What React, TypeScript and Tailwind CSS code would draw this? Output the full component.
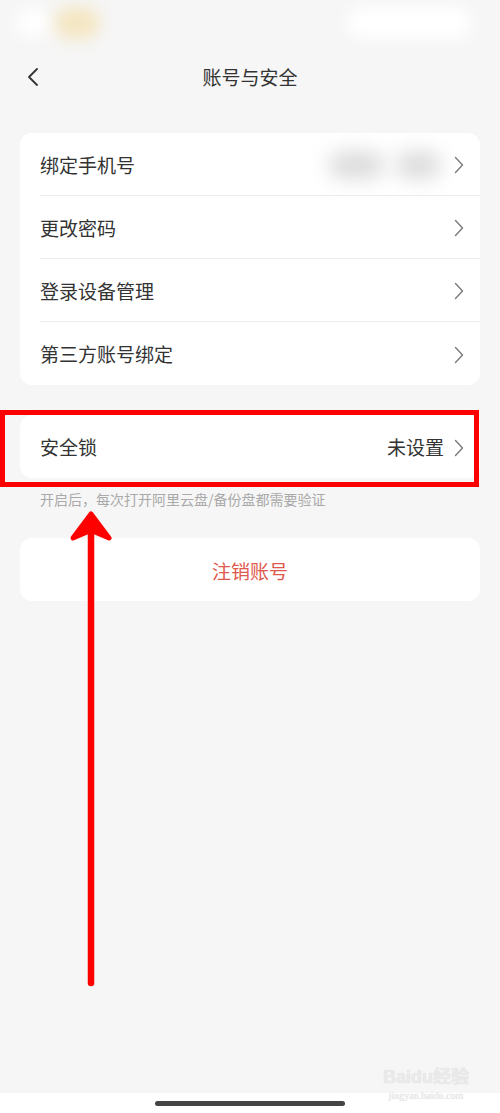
import React from "react";

const font = { fontFamily: '"Noto Sans CJK SC", "Noto Sans", sans-serif' };

function Chevron() {
  return (
    <svg width="10" height="18" viewBox="0 0 10 18" className="shrink-0">
      <path d="M1.5 1.5 L8.5 9 L1.5 16.5" fill="none" stroke="#7a7a7a" strokeWidth="1.4" strokeLinecap="round" strokeLinejoin="round" />
    </svg>
  );
}

function Row({ label, right, last }: { label: string; right?: React.ReactNode; last?: boolean }) {
  return (
    <div className="flex h-[63px] items-center pl-5">
      <div className={`flex h-full flex-1 items-center pr-4 pt-[2px] ${last ? "" : "border-b border-[#ececec]"}`}>
        <span className="flex-1 text-[19px] text-[#333]">{label}</span>
        {right}
        <span className="ml-2.5">
          <Chevron />
        </span>
      </div>
    </div>
  );
}

export default function App() {
  const rows = ["绑定手机号", "更改密码", "登录设备管理", "第三方账号绑定"];
  return (
    <div className="relative flex h-[1113px] w-[500px] flex-col overflow-hidden bg-[#f6f6f6]" style={font}>
      {/* status bar (blurred in shot) */}
      <div className="flex h-[45px] items-center justify-between px-4">
        <div className="flex items-center gap-1 blur-[8px]">
          <div className="h-[28px] w-[34px] rounded-full bg-white" />
          <div className="h-[32px] w-[46px] rounded-2xl bg-[#f4e6c2]" />
        </div>
        <div className="mr-3 h-[32px] w-[125px] rounded-full bg-white blur-[8px]" />
      </div>

      {/* nav */}
      <div className="relative flex h-[64px] items-center justify-center">
        <div className="absolute left-[26px] top-[22px]">
          <svg width="14" height="20" viewBox="0 0 14 20">
            <path d="M11 2 L3 10 L11 18" fill="none" stroke="#333" strokeWidth="1.8" strokeLinecap="round" strokeLinejoin="round" />
          </svg>
        </div>
        <span className="text-[19px] text-[#333]">账号与安全</span>
      </div>

      <div className="mt-6 flex flex-col px-5">
        <div className="overflow-hidden rounded-xl bg-white">
          {rows.map((r, i) => (
            <Row
              key={r}
              label={r}
              last={i === rows.length - 1}
              right={
                i === 0 ? (
                  <div className="-mr-1 flex h-[45px] w-[127px] items-center justify-center gap-3 bg-white">
                    <div className="h-[26px] w-[55px] rounded-full bg-[#dadada] blur-[10px]" />
                    <div className="h-[26px] w-[45px] rounded-full bg-[#dadada] blur-[10px]" />
                  </div>
                ) : undefined
              }
            />
          ))}
        </div>

        <div className="mt-[30px] overflow-hidden rounded-xl bg-white">
          <Row label="安全锁" last right={<span className="text-[19px] text-[#333]">未设置</span>} />
        </div>

        <p className="mt-[11px] pl-5 text-[14px] leading-5 text-[#a9a9a9]">开启后，每次打开阿里云盘/备份盘都需要验证</p>

        <div className="mt-[29px] flex h-[63px] items-center justify-center rounded-xl bg-white pt-[3px]">
          <span className="text-[19px] text-[#e0574c]">注销账号</span>
        </div>
      </div>

      <div className="flex-1" />

      {/* home indicator */}
      <div className="flex h-[20px] items-center justify-center bg-white">
        <div className="h-[5px] w-[190px] rounded-full bg-[#444]" />
      </div>

      {/* red highlight box */}
      <div className="pointer-events-none absolute left-0 top-[410px] h-[77px] w-[479px] border-[5px] border-[#ff0000]" />

      {/* red arrow */}
      <svg className="pointer-events-none absolute left-0 top-0" width="500" height="1113" viewBox="0 0 500 1113">
        <path d="M91 530 L91 983" stroke="#ff0000" strokeWidth="6.5" strokeLinecap="round" />
        <path d="M91 514 L109 538 L95 532 L87 532 L73 538 Z" fill="#ff0000" stroke="#ff0000" strokeWidth="5" strokeLinejoin="round" />
      </svg>

      {/* watermark */}
      <div className="pointer-events-none absolute left-[383px] top-[1068px] flex flex-col items-center leading-none text-[#eaeaea]" style={{ textShadow: "0 0 1px #d8d8d8" }}>
        <span className="text-[18px] font-bold" style={{ fontFamily: '"Liberation Sans", "Noto Sans CJK SC", sans-serif' }}>
          Baidu经验
        </span>
        <span className="mt-[5px] text-[10px]" style={{ fontFamily: '"Liberation Serif", serif' }}>
          jingyan.baidu.com
        </span>
      </div>
    </div>
  );
}
